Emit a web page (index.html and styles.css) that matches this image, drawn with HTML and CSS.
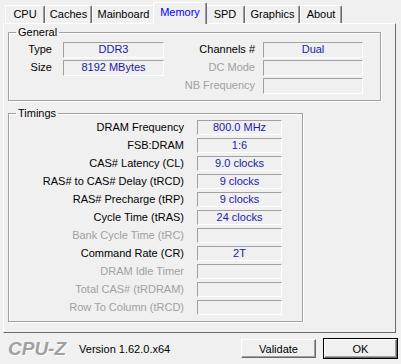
FILE: index.html
```html
<!DOCTYPE html>
<html lang="en">

<head>
  <meta charset="UTF-8" />
  <title>CPU-Z</title>
  <link rel="stylesheet" href="styles.css">
</head>

<body>
  <ul class="tabs">
    <li>CPU</li>
    <li>Caches</li>
    <li>Mainboard</li>
    <li class="active">Memory</li>
    <li>SPD</li>
    <li>Graphics</li>
    <li>About</li>
  </ul>

  <div class="panel">
    <fieldset class="group general">
      <legend>General</legend>
      <div class="general-grid">
        <span class="label first">Type</span>
        <span class="value">DDR3</span>
        <span class="label second">Channels #</span>
        <span class="value">Dual</span>

        <span class="label first">Size</span>
        <span class="value">8192 MBytes</span>
        <span class="label second off">DC Mode</span>
        <span class="value"></span>

        <span></span>
        <span></span>
        <span class="label second off">NB Frequency</span>
        <span class="value"></span>
      </div>
    </fieldset>

    <fieldset class="group timings">
      <legend>Timings</legend>
      <div class="timings-grid">
        <span class="label">DRAM Frequency</span><span class="value">800.0 MHz</span>
        <span class="label">FSB:DRAM</span><span class="value">1:6</span>
        <span class="label">CAS# Latency (CL)</span><span class="value">9.0 clocks</span>
        <span class="label">RAS# to CAS# Delay (tRCD)</span><span class="value">9 clocks</span>
        <span class="label">RAS# Precharge (tRP)</span><span class="value">9 clocks</span>
        <span class="label">Cycle Time (tRAS)</span><span class="value">24 clocks</span>
        <span class="label off">Bank Cycle Time (tRC)</span><span class="value"></span>
        <span class="label">Command Rate (CR)</span><span class="value">2T</span>
        <span class="label off">DRAM Idle Timer</span><span class="value"></span>
        <span class="label off">Total CAS# (tRDRAM)</span><span class="value"></span>
        <span class="label off">Row To Column (tRCD)</span><span class="value"></span>
      </div>
    </fieldset>
  </div>

  <div class="footer">
    <span class="logo">CPU-Z</span>
    <span class="version">Version 1.62.0.x64</span>
    <button class="btn validate">Validate</button>
    <button class="btn ok">OK</button>
  </div>
</body>

</html>
```

FILE: styles.css
```css
* {
  box-sizing: border-box;
}

body {
  margin: 0;
  width: 401px;
  height: 364px;
  overflow: hidden;
  background-color: #f0f0f0;
  color: #000;
  font-family: "Liberation Sans", Arial, sans-serif;
  font-size: 11px;
}

/* tab strip */
.tabs {
  list-style: none;
  display: flex;
  align-items: flex-end;
  height: 23px;
  margin: 0;
  padding: 0 0 0 5px;
}

.tabs li {
  height: 18px;
  line-height: 16px;
  text-align: center;
  border: 1px solid #fff;
  border-right-color: #696969;
  border-bottom: none;
  border-radius: 2px 2px 0 0;
  box-shadow: inset -1px 0 0 #a0a0a0;
}

.tabs li:nth-child(1) { width: 40px; }
.tabs li:nth-child(2) { width: 47px; }
.tabs li:nth-child(3) { width: 63px; }
.tabs li:nth-child(4) { width: 50px; }
.tabs li:nth-child(5) { width: 40px; }
.tabs li:nth-child(6) { width: 55px; }
.tabs li:nth-child(7) { width: 42px; }

.tabs li.active {
  position: relative;
  z-index: 1;
  height: 22px;
  margin: 0 -2px -1px;
  width: 54px;
  line-height: 18px;
  color: #0000ff;
  background-color: #f0f0f0;
}

/* page body */
.panel {
  height: 310px;
  margin: 0 5px 0 3px;
  padding: 0 0 0 4px;
  border: 1px solid #fff;
  border-right-color: #696969;
  border-bottom-color: #696969;
}

.group {
  margin: 0;
  padding: 0;
  min-width: 0;
  border: 1px solid #a0a0a0;
  box-shadow: 1px 1px 0 #fff, inset 1px 1px 0 #fff;
}

.group legend {
  margin-left: 7px;
  padding: 0 2px;
  line-height: 13px;
}

.general {
  width: 373px;
  margin-top: 2px;
  padding: 3px 0 6px;
}

.timings {
  width: 295px;
  margin-top: 6px;
  padding: 0 0 6px;
}

.general-grid {
  display: grid;
  grid-template-columns: 54px 101px 99px 100px;
  grid-auto-rows: 16px;
  row-gap: 2px;
}

.timings-grid {
  display: grid;
  grid-template-columns: 188px 85px;
  grid-auto-rows: 15px;
  row-gap: 3px;
}

.label {
  text-align: right;
  line-height: 15px;
  white-space: nowrap;
}

.general-grid .first {
  padding-right: 11px;
}

.general-grid .second {
  padding-right: 8px;
}

.timings-grid .label {
  padding-right: 13px;
}

.label.off {
  color: #a0a0a0;
}

.value {
  text-align: center;
  line-height: 13px;
  color: #1a1aa6;
  border: 1px solid #a0a0a0;
  border-right-color: #fff;
  border-bottom-color: #fff;
}

/* bottom bar */
.footer {
  display: flex;
  align-items: center;
  height: 31px;
  padding: 0 3px 0 8px;
}

.logo {
  font-size: 19px;
  font-weight: 700;
  font-style: italic;
  color: #a0a0a0;
  text-shadow: 1px 1px 0 #fff;
}

.version {
  margin-left: 13px;
}

.btn {
  height: 19px;
  padding: 0;
  font-family: inherit;
  font-size: 11px;
  color: #000;
  background-color: #f0f0f0;
  border: 1px solid #fff;
  border-right-color: #696969;
  border-bottom-color: #696969;
  box-shadow: inset -1px -1px 0 #a0a0a0;
}

.validate {
  width: 75px;
  margin-left: auto;
}

.ok {
  width: 75px;
  height: 21px;
  margin-left: 7px;
  outline: 1px solid #000;
  outline-offset: -1px;
  border-width: 2px 2px 2px 2px;
  border-color: #fff #696969 #696969 #fff;
}
```
